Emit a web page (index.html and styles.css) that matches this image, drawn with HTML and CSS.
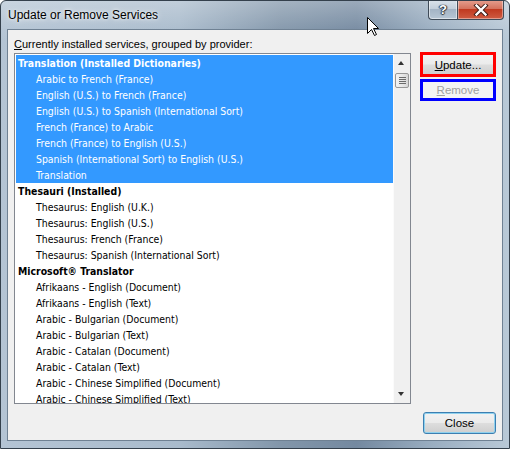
FILE: index.html
```html
<!DOCTYPE html>
<html>
<head>
<meta charset="utf-8">
<link rel="stylesheet" href="styles.css">
</head>
<body>
<div class="window">
  <div class="titlebar">
    <div class="title">Update or Remove Services</div>
    <div class="caption">
      <div class="cap help">?</div>
      <div class="cap close">
        <svg width="16" height="12" viewBox="0 0 16 12"><path d="M3.5 1.5 L12.5 10.5 M12.5 1.5 L3.5 10.5" stroke="#3b1a14" stroke-width="4.2" stroke-linecap="square"/><path d="M3.5 1.5 L12.5 10.5 M12.5 1.5 L3.5 10.5" stroke="#ffffff" stroke-width="2.4" stroke-linecap="square"/></svg>
      </div>
    </div>
  </div>
  <div class="client">
    <div class="label"><u>C</u>urrently installed services, grouped by provider:</div>
    <div class="main">
      <div class="listbox">
        <div class="rows">
          <div class="row head sel">Translation (Installed Dictionaries)</div>
          <div class="row sel">Arabic to French (France)</div>
          <div class="row sel">English (U.S.) to French (France)</div>
          <div class="row sel">English (U.S.) to Spanish (International Sort)</div>
          <div class="row sel">French (France) to Arabic</div>
          <div class="row sel">French (France) to English (U.S.)</div>
          <div class="row sel">Spanish (International Sort) to English (U.S.)</div>
          <div class="row sel">Translation</div>
          <div class="row head">Thesauri (Installed)</div>
          <div class="row">Thesaurus: English (U.K.)</div>
          <div class="row">Thesaurus: English (U.S.)</div>
          <div class="row">Thesaurus: French (France)</div>
          <div class="row">Thesaurus: Spanish (International Sort)</div>
          <div class="row head">Microsoft® Translator</div>
          <div class="row">Afrikaans - English (Document)</div>
          <div class="row">Afrikaans - English (Text)</div>
          <div class="row">Arabic - Bulgarian (Document)</div>
          <div class="row">Arabic - Bulgarian (Text)</div>
          <div class="row">Arabic - Catalan (Document)</div>
          <div class="row">Arabic - Catalan (Text)</div>
          <div class="row">Arabic - Chinese Simplified (Document)</div>
          <div class="row">Arabic - Chinese Simplified (Text)</div>
        </div>
        <div class="scrollbar">
          <div class="arrow up"></div>
          <div class="thumb"><i></i><i></i><i></i><i></i></div>
          <div class="track"></div>
          <div class="arrow down"></div>
        </div>
      </div>
      <div class="buttons">
        <div class="btn update"><u>U</u>pdate...</div>
        <div class="btn remove"><u>R</u>emove</div>
      </div>
    </div>
    <div class="footer">
      <div class="btn closebtn">Close</div>
    </div>
  </div>
  <svg class="cursor" width="13" height="20" viewBox="0 0 13 20"><path d="M0.5 0.5 L0.5 16.5 L4.5 12.5 L7.5 18.5 L9.5 17.5 L6.5 11.5 L11.5 11.5 Z" fill="#ffffff" stroke="#000000" stroke-width="1" stroke-linejoin="miter"/></svg>
</div>
</body>
</html>
```
FILE: styles.css
```css
* { box-sizing: border-box; }
html, body { margin: 0; padding: 0; }
body { width: 510px; height: 449px; overflow: hidden; background: #ffffff; font-family: "Liberation Sans", Arial, sans-serif; }

.window {
  position: relative;
  width: 510px;
  height: 449px;
  border: 1px solid #34404c;
  border-radius: 6px 6px 0 0;
  background:
    linear-gradient(180deg, rgba(255,255,255,0.28) 0px, rgba(255,255,255,0.05) 28px, rgba(255,255,255,0) 40px),
    linear-gradient(90deg, #b4c4d4 0%, #a9bbcc 35%, #8296aa 55%, #7489a0 70%, #9aaec1 85%, #b9c9d7 100%);
  display: flex;
  flex-direction: column;
  overflow: hidden;
}

.titlebar {
  height: 28px;
  flex: none;
  display: flex;
  justify-content: space-between;
  align-items: flex-start;
}
.title {
  margin: 7px 0 0 7px;
  font-size: 12px;
  line-height: 15px;
  color: #000;
  text-shadow: 0 0 6px rgba(255,255,255,0.9), 0 0 3px rgba(255,255,255,0.8);
}
.caption { display: flex; margin-right: 5px; margin-top: -1px; }
.cap {
  height: 20px;
  border: 1px solid #3f4b58;
  border-top: none;
  display: flex;
  align-items: center;
  justify-content: center;
}
.help {
  width: 29px;
  border-radius: 0 0 0 4px;
  border-right: none;
  background: linear-gradient(180deg, #dbe3eb 0%, #c3cfdb 45%, #a4b4c5 50%, #b7c6d4 100%);
  color: #fff;
  font-weight: bold;
  font-size: 13px;
  text-shadow: 0 0 1px #2b3440, 1px 0 1px #2b3440, -1px 0 1px #2b3440, 0 1px 1px #2b3440;
  box-shadow: inset 0 0 0 1px rgba(255,255,255,0.5);
}
.close {
  width: 47px;
  border-radius: 0 0 4px 0;
  background: linear-gradient(180deg, #e6a090 0%, #d5735e 45%, #c13a20 50%, #cf5c42 100%);
  box-shadow: inset 0 0 0 1px rgba(255,255,255,0.4);
}

.client {
  flex: 1;
  margin: 0 6px 7px 6px;
  border: 1px solid #6f8193;
  background: #f0f0f0;
  padding: 7px 6px 6px 6px;
  display: flex;
  flex-direction: column;
}
.label {
  height: 16px;
  font-size: 11px;
  line-height: 14px;
  color: #000;
}
.main { display: flex; gap: 9px; }
.listbox {
  width: 398px;
  height: 351px;
  border: 1px solid #828790;
  background: #fff;
  display: flex;
  overflow: hidden;
}
.rows { flex: 1; padding: 1px 0 0 1px; overflow: hidden; }
.row {
  height: 16px;
  line-height: 16px;
  padding-left: 20px;
  font-family: "DejaVu Sans Condensed", "DejaVu Sans", sans-serif;
  font-stretch: condensed;
  font-size: 10.4px;
  color: #000;
  white-space: nowrap;
}
.row.head { padding-left: 2px; font-weight: bold; }
.row.sel { background: #3399ff; color: #fff; }

.scrollbar {
  width: 17px;
  flex: none;
  background: #f0f0f0;
  border-left: 1px solid #fbfbfb;
  display: flex;
  flex-direction: column;
}
.arrow { height: 17px; position: relative; }
.arrow::after {
  content: "";
  position: absolute;
  left: 4px;
  border-left: 3.5px solid transparent;
  border-right: 3.5px solid transparent;
}
.arrow.up::after { top: 7px; border-bottom: 4px solid #333; }
.arrow.down::after { top: 6px; border-top: 4px solid #333; }
.thumb {
  margin: 2px 1px 0 1px;
  height: 15px;
  border: 1px solid #979797;
  border-radius: 2px;
  background: linear-gradient(90deg, #f3f3f3, #e8e8e8 50%, #d6d6d6);
  display: flex;
  flex-direction: column;
  justify-content: center;
  align-items: center;
  gap: 1px;
}
.thumb i { display: block; width: 7px; height: 1px; background: #6b6b6b; }
.track { flex: 1; }

.buttons { display: flex; flex-direction: column; gap: 2px; margin-top: -1px; }
.btn {
  font-family: "Liberation Sans", Arial, sans-serif;
  font-size: 11.5px;
  display: flex;
  align-items: center;
  justify-content: center;
  color: #000;
}
.update {
  width: 76px;
  height: 25px;
  border: 3px solid #ff0000;
  background: linear-gradient(180deg, #f2f2f2 0%, #ebebeb 48%, #dddddd 52%, #cfcfcf 100%);
}
.remove {
  width: 76px;
  height: 22px;
  border: 3px solid #0000ff;
  background: #f4f4f4;
  color: #a0a0a0;
}
.footer { display: flex; justify-content: flex-end; margin-top: 8px; }
.closebtn {
  width: 73px;
  height: 22px;
  border: 1px solid #3c7fb1;
  border-radius: 3px;
  background: linear-gradient(180deg, #f2f2f2 0%, #ebebeb 48%, #dddddd 52%, #cfcfcf 100%);
  box-shadow: inset 0 0 0 1px #8fd1ee;
}

.cursor { position: absolute; left: 366px; top: 16px; }
```
